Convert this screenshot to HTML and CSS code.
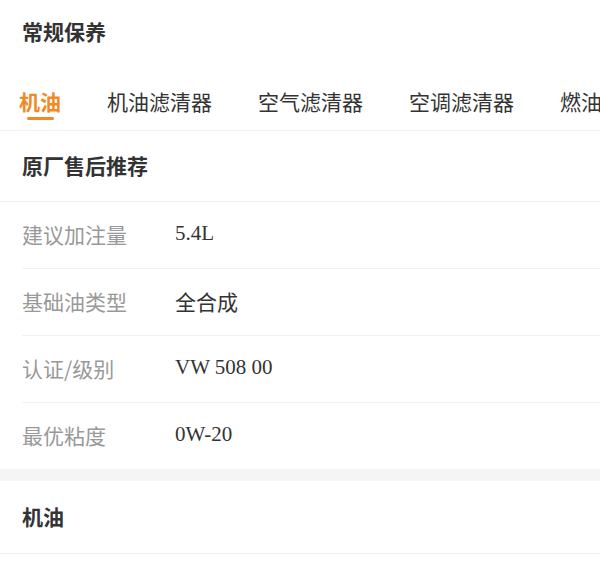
FILE: index.html
```html
<!DOCTYPE html>
<html lang="zh-CN">
<head>
    <meta charset="UTF-8">
    <meta name="viewport" content="width=device-width, initial-scale=1.0">
    <title>常规保养</title>
    <link rel="stylesheet" href="styles.css">
</head>
<body>
    <div class="page">
        <h2 class="page-title">常规保养</h2>

        <div class="tabs">
            <div class="tab active">机油</div>
            <div class="tab">机油滤清器</div>
            <div class="tab">空气滤清器</div>
            <div class="tab">空调滤清器</div>
            <div class="tab">燃油滤清器</div>
        </div>

        <div class="section">
            <h3 class="section-title">原厂售后推荐</h3>
            <div class="row">
                <span class="label">建议加注量</span>
                <span class="value">5.4L</span>
            </div>
            <div class="row">
                <span class="label">基础油类型</span>
                <span class="value">全合成</span>
            </div>
            <div class="row">
                <span class="label">认证/级别</span>
                <span class="value">VW 508 00</span>
            </div>
            <div class="row">
                <span class="label">最优粘度</span>
                <span class="value">0W-20</span>
            </div>
        </div>

        <div class="section">
            <h3 class="section-title">机油</h3>
        </div>
    </div>
</body>
</html>
```

FILE: styles.css
```css
body { margin: 0; background: #fff; font-family: "Noto Sans CJK SC", "Noto Sans", sans-serif; color: #333; }
.page { width: 600px; overflow: hidden; }
.page-title { margin: 0; padding-left: 22px; height: 68px; line-height: 62px; font-size: 21px; font-weight: bold; color: #333; }
.tabs { display: flex; gap: 46px; padding-left: 19px; border-bottom: 1px solid #f2f2f2; white-space: nowrap; }
.tab { flex-shrink: 0; padding-top: 21px; height: 41px; line-height: 24px; font-size: 21px; color: #333; }
.tab.active { color: #f08a24; font-weight: bold; }
.tab.active::after { content: ""; display: block; width: 27px; height: 3px; margin: 4px auto 0; background: #f08a24; border-radius: 2px; }
.section { border-bottom: 12px solid #f5f5f5; }
.section:last-child { border-bottom: 0; }
.section-title { margin: 0; padding-left: 22px; height: 70px; line-height: 68px; font-size: 21px; font-weight: bold; color: #333; border-bottom: 1px solid #f2f2f2; }
.section:last-child .section-title { height: 72px; line-height: 70px; }
.row { display: flex; align-items: center; height: 63px; padding-bottom: 3px; margin-left: 22px; border-bottom: 1px solid #f2f2f2; font-size: 21px; }
.row:last-child { border-bottom: 0; }
.label { width: 153px; color: #999; }
.value { color: #333; font-family: "Liberation Serif", "Noto Sans CJK SC", serif; font-size: 21px; }
```
